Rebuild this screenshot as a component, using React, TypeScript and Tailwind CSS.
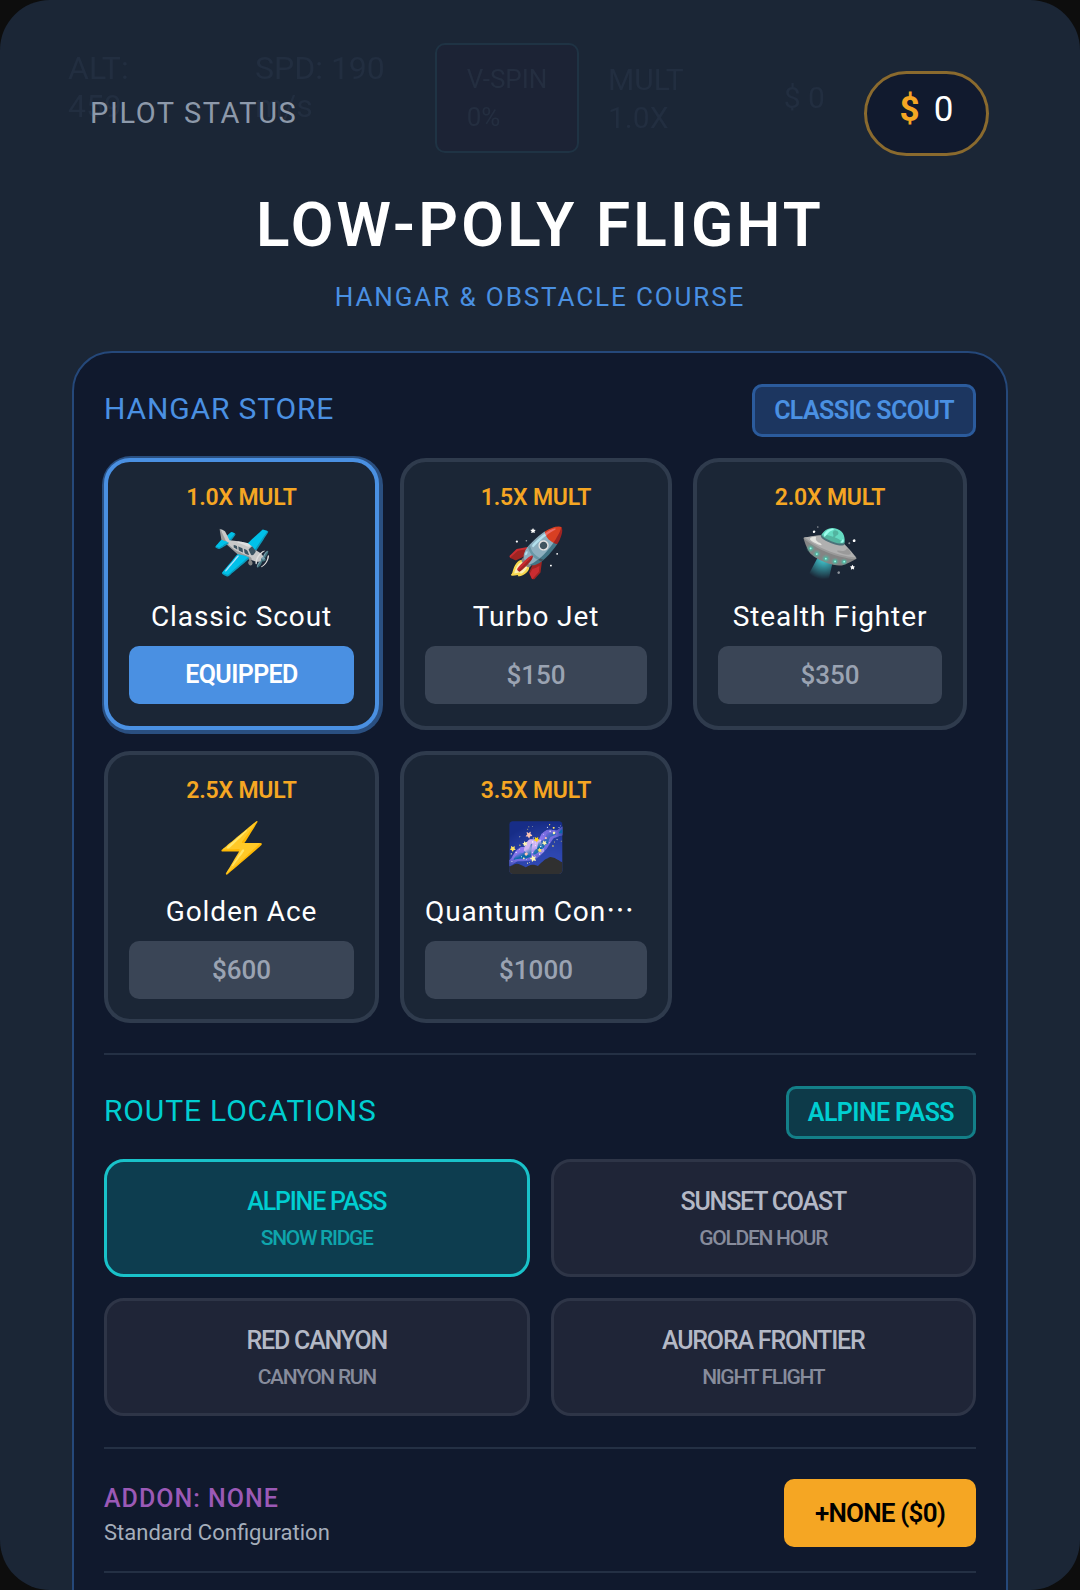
const planes = [
  { mult: '1.0X MULT', icon: '🛩️', name: 'Classic Scout', action: 'EQUIPPED', active: true },
  { mult: '1.5X MULT', icon: '🚀', name: 'Turbo Jet', action: '$150' },
  { mult: '2.0X MULT', icon: '🛸', name: 'Stealth Fighter', action: '$350' },
  { mult: '2.5X MULT', icon: '⚡', name: 'Golden Ace', action: '$600', lower: true },
  { mult: '3.5X MULT', icon: '🌌', name: 'Quantum Concorde', cut: true, action: '$1000', lower: true },
]

const routes = [
  { name: 'ALPINE PASS', sub: 'SNOW RIDGE', active: true },
  { name: 'SUNSET COAST', sub: 'GOLDEN HOUR' },
  { name: 'RED CANYON', sub: 'CANYON RUN' },
  { name: 'AURORA FRONTIER', sub: 'NIGHT FLIGHT' },
]

function PlaneCard({ plane }: { plane: (typeof planes)[number] }) {
  return (
    <div
      className={`flex h-[272px] min-w-0 flex-col items-center rounded-[26px] border-4 bg-[#1b2636] px-[21px] pt-[20px] ${
        plane.active ? 'border-[#4a90e2] shadow-[1px_1px_0_3px_#2a4f80]' : 'border-[#2f3b4d]'
      }`}
    >
      <div className="text-[23px] leading-[32px] font-semibold tracking-[-0.2px] text-[#f5a623]">{plane.mult}</div>
      <div className={`h-[60px] text-[48px] leading-[60px] ${plane.lower ? 'mt-[11px]' : 'mt-[9px]'}`}>{plane.icon}</div>
      {/* the ellipsis comes from the block's font, the name itself stays Roboto */}
      <div
        className={`w-full truncate text-center text-[28px] leading-[40px] tracking-[0.9px] text-white ${
          plane.cut ? "mt-[11px] h-[43px] font-['Noto_Sans_CJK_SC']" : 'mt-[14px] h-[40px]'
        }`}
      >
        <span className="font-['Roboto']">{plane.name}</span>
      </div>
      <button
        className={`mt-[9px] h-[58px] w-full rounded-[10px] ${
          plane.active
            ? 'bg-[#4a90e2] text-[25px] font-semibold tracking-[-0.6px] text-white'
            : 'bg-[#3a4556] text-[26px] font-medium text-[#9aa3b2]'
        }`}
      >
        {plane.action}
      </button>
    </div>
  )
}

function RouteCard({ route }: { route: (typeof routes)[number] }) {
  return (
    <div
      className={`flex h-[118px] flex-col items-center justify-center rounded-[20px] border-[3px] pt-[3px] ${
        route.active ? 'border-[#19c2c9] bg-[#0d3d4f]' : 'border-[#2e3547] bg-[#1f2537]'
      }`}
    >
      <div className={`text-[25px] leading-[36px] font-medium tracking-[-1.2px] ${route.active ? 'text-[#00ced1]' : 'text-[#b4b9c6]'}`}>{route.name}</div>
      <div className={`text-[21px] leading-[36px] font-medium tracking-[-1.3px] ${route.active ? 'text-[#0fa5ac]' : 'text-[#878c9c]'}`}>{route.sub}</div>
    </div>
  )
}

export default function App() {
  return (
    <div className="h-[1590px] w-[1080px] bg-[#0d0d0d] font-['Roboto','Liberation_Sans',sans-serif]">
      <div className="relative h-full overflow-hidden rounded-[50px] bg-[#1b2636]">
        {/* HUD sitting behind the menu, almost faded out */}
        <div className="absolute top-[43px] left-[68px] flex items-start text-[32px] leading-[38px] text-[#222e40] blur-[0.6px]">
          <div className="w-[187px] pt-[6px]">ALT:<br />459</div>
          <div className="w-[180px] pt-[6px]">SPD: 190<br />m/s</div>
          <div className="flex h-[110px] w-[144px] flex-col items-center justify-center rounded-[10px] border-2 border-[#1f3344] bg-[#1c2335] text-[26px] text-[#242e40]">V-SPIN<br />0%</div>
          <div className="ml-[29px] pt-[18px] text-[30px]">MULT<br />1.0X</div>
          <div className="ml-[100px] pt-[36px] text-[30px]">$ 0</div>
        </div>

        <div className="relative px-[72px] pt-[71px]">
          <div className="flex items-start justify-between">
            <div className="pt-[21px] pl-[18px] text-[29px] leading-[42px] tracking-[1.6px] text-[#8d99aa]">PILOT STATUS</div>
            <div className="mr-[19px] flex h-[85px] w-[125px] items-center justify-center gap-[14px] rounded-full border-[3px] border-[#8a6a2e] bg-[#111a2e] pb-[6px]">
              <span className="text-[35px] font-bold text-[#f5a623]">$</span>
              <span className="text-[35px] text-white">0</span>
            </div>
          </div>

          <h1 className="mt-[33px] text-center text-[62px] leading-[72px] font-semibold tracking-[3.2px] text-white">LOW-POLY FLIGHT</h1>
          <p className="mt-[18px] text-center text-[26px] leading-[36px] tracking-[1.9px] text-[#4a90e2]">HANGAR &amp; OBSTACLE COURSE</p>

          <div className="mt-[36px] rounded-t-[40px] border-2 border-[#25487a] bg-[#10192d] px-[30px] pt-[31px] pb-[40px]">
            <div className="flex items-center justify-between">
              <h2 className="pb-[4px] text-[30px] leading-[42px] tracking-[0.85px] text-[#4a90e2]">HANGAR STORE</h2>
              <span className="rounded-[10px] border-[3px] border-[#2b5b9c] bg-[#1c3660] px-[19px] text-[25px] leading-[47px] font-semibold tracking-[-0.6px] text-[#4a90e2]">CLASSIC SCOUT</span>
            </div>

            <div className="mt-[21px] grid grid-cols-[275px_272px_274px] gap-[21px]">
              {planes.map((plane) => (
                <PlaneCard key={plane.name} plane={plane} />
              ))}
            </div>

            <div className="mt-[30px] h-[2px] bg-[#243044]" />

            <div className="mt-[31px] flex items-center justify-between">
              <h2 className="pb-[4px] text-[30px] leading-[42px] tracking-[0.85px] text-[#00ced1]">ROUTE LOCATIONS</h2>
              <span className="rounded-[10px] border-[3px] border-[#137f88] bg-[#0d3a49] px-[19px] text-[25px] leading-[47px] font-semibold tracking-[-0.6px] text-[#00ced1]">ALPINE PASS</span>
            </div>

            <div className="mt-[20px] grid grid-cols-2 gap-[21px]">
              {routes.map((route) => (
                <RouteCard key={route.name} route={route} />
              ))}
            </div>

            <div className="mt-[31px] h-[2px] bg-[#243044]" />

            <div className="mt-[31px] flex items-center justify-between">
              <div className="pb-[1px]">
                <div className="pt-[1px] text-[25px] leading-[36px] font-medium tracking-[1px] text-[#9b59b6]">ADDON: NONE</div>
                <div className="text-[22px] leading-[32px] text-[#a5aebb]">Standard Configuration</div>
              </div>
              <button className="-mt-[4px] h-[68px] w-[192px] rounded-[10px] bg-[#f5a623] text-[26px] font-semibold tracking-[-0.8px] text-black">+NONE ($0)</button>
            </div>

            <div className="mt-[21px] h-[2px] bg-[#243044]" />
          </div>
        </div>
      </div>
    </div>
  )
}
